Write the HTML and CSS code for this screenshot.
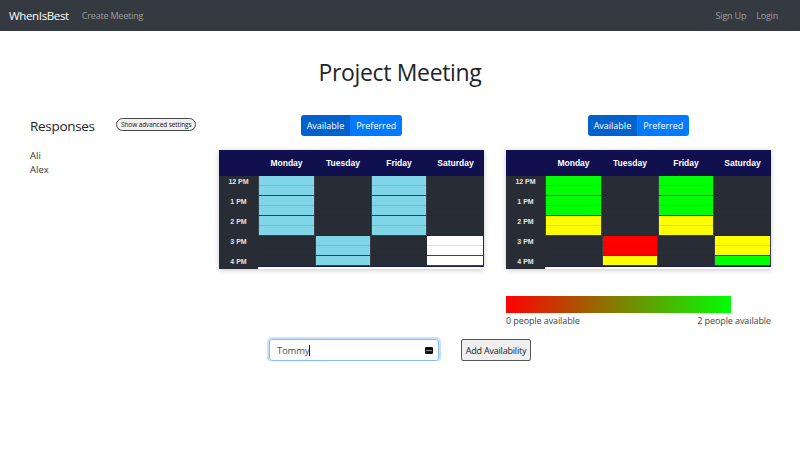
FILE: index.html
```html
<!DOCTYPE html>
<html lang="en">
<head>
<meta charset="utf-8">
<title>WhenIsBest - Project Meeting</title>
<link rel="stylesheet" href="styles.css">
</head>
<body>
<nav class="navbar">
  <div class="nav-left">
    <span class="brand">WhenIsBest</span>
    <span class="nav-link">Create Meeting</span>
  </div>
  <div class="nav-right">
    <span class="nav-link">Sign Up</span>
    <span class="nav-link">Login</span>
  </div>
</nav>

<h1 class="title">Project Meeting</h1>

<div class="main">
  <aside class="responses">
    <div class="resp-head">
      <h2>Responses</h2>
      <button class="pill">Show advanced settings</button>
    </div>
    <ul class="names">
      <li>Ali</li>
      <li>Alex</li>
    </ul>
  </aside>

  <section class="schedule">
    <div class="btn-group">
      <span class="btn active">Available</span>
      <span class="btn">Preferred</span>
    </div>
    <div class="table">
      <div class="thead">
        <div class="th-time"></div>
        <div class="th w57">Monday</div>
        <div class="th w56">Tuesday</div>
        <div class="th w56">Friday</div>
        <div class="th w57">Saturday</div>
      </div>
      <div class="tbody">
        <div class="times">
          <div class="time">12 PM</div>
          <div class="time">1 PM</div>
          <div class="time">2 PM</div>
          <div class="time">3 PM</div>
          <div class="time last">4 PM</div>
        </div>
        <div class="days">
          <div class="day w57">
            <div class="cell c-cyan"><i></i></div>
            <div class="cell c-cyan"><i></i></div>
            <div class="cell c-cyan"><i></i></div>
            <div class="cell"></div>
            <div class="cell half"></div>
          </div>
          <div class="day w56">
            <div class="cell"></div>
            <div class="cell"></div>
            <div class="cell"></div>
            <div class="cell c-cyan"><i></i></div>
            <div class="cell half c-cyan"></div>
          </div>
          <div class="day w56">
            <div class="cell c-cyan"><i></i></div>
            <div class="cell c-cyan"><i></i></div>
            <div class="cell c-cyan"><i></i></div>
            <div class="cell"></div>
            <div class="cell half"></div>
          </div>
          <div class="day w57">
            <div class="cell"></div>
            <div class="cell"></div>
            <div class="cell"></div>
            <div class="cell c-white"><i></i></div>
            <div class="cell half c-white"></div>
          </div>
        </div>
      </div>
    </div>
  </section>

  <section class="schedule">
    <div class="btn-group">
      <span class="btn active">Available</span>
      <span class="btn">Preferred</span>
    </div>
    <div class="table">
      <div class="thead">
        <div class="th-time"></div>
        <div class="th w57">Monday</div>
        <div class="th w56">Tuesday</div>
        <div class="th w56">Friday</div>
        <div class="th w57">Saturday</div>
      </div>
      <div class="tbody">
        <div class="times">
          <div class="time">12 PM</div>
          <div class="time">1 PM</div>
          <div class="time">2 PM</div>
          <div class="time">3 PM</div>
          <div class="time last">4 PM</div>
        </div>
        <div class="days">
          <div class="day w57">
            <div class="cell c-green"><i></i></div>
            <div class="cell c-green"><i></i></div>
            <div class="cell c-yellow"><i></i></div>
            <div class="cell"></div>
            <div class="cell half"></div>
          </div>
          <div class="day w56">
            <div class="cell"></div>
            <div class="cell"></div>
            <div class="cell"></div>
            <div class="cell c-red"><i></i></div>
            <div class="cell half c-yellow"></div>
          </div>
          <div class="day w56">
            <div class="cell c-green"><i></i></div>
            <div class="cell c-green"><i></i></div>
            <div class="cell c-yellow"><i></i></div>
            <div class="cell"></div>
            <div class="cell half"></div>
          </div>
          <div class="day w57">
            <div class="cell"></div>
            <div class="cell"></div>
            <div class="cell"></div>
            <div class="cell c-yellow"><i></i></div>
            <div class="cell half c-green"></div>
          </div>
        </div>
      </div>
    </div>
    <div class="legend">
      <div class="gradient"></div>
      <div class="legend-labels">
        <span>0 people available</span>
        <span>2 people available</span>
      </div>
    </div>
  </section>
</div>

<div class="form-row">
  <div class="input">
    <span class="input-text">Tommy</span><span class="caret"></span>
    <span class="key-icon"><svg width="8" height="7" viewBox="0 0 8 7"><rect x="0" y="0" width="8" height="7" rx="1.2" fill="#111"/><circle cx="2" cy="3.6" r="0.7" fill="#fff"/><circle cx="4" cy="3.6" r="0.7" fill="#fff"/><circle cx="6" cy="3.6" r="0.7" fill="#fff"/></svg></span>
  </div>
  <button class="add-btn">Add Availability</button>
</div>
</body>
</html>
```

FILE: styles.css
```css
* { box-sizing: border-box; }

html, body {
  margin: 0;
  padding: 0;
  background: #fff;
  font-family: "Open Sans", "Noto Sans", sans-serif;
  color: #212529;
}

.navbar {
  height: 31px;
  background: #343a40;
  display: flex;
  align-items: center;
  justify-content: space-between;
  padding: 0 22px 0 9px;
}
.nav-left, .nav-right {
  display: flex;
  align-items: center;
}
.brand {
  color: #fff;
  font-size: 11.5px;
  margin-right: 13px;
  letter-spacing: -0.35px;
}
.nav-link {
  color: rgba(255,255,255,0.5);
  font-size: 9px;
  letter-spacing: -0.2px;
}
.nav-right .nav-link + .nav-link { margin-left: 10px; }

.title {
  margin: 27px 0 0;
  text-align: center;
  font-size: 23px;
  line-height: 29px;
  font-weight: 500;
  letter-spacing: -0.35px;
}

.main {
  display: flex;
  align-items: flex-start;
  margin-top: 28px;
  padding-left: 30px;
  gap: 22px;
}

.responses {
  width: 167px;
}
.resp-head {
  display: flex;
  align-items: center;
  height: 21px;
}
.resp-head h2 {
  margin: 0;
  font-size: 13.5px;
  font-weight: 500;
  width: 86px;
  letter-spacing: -0.3px;
}
.pill {
  height: 13px;
  padding: 0 4px;
  border: 1px solid #444;
  border-radius: 7px;
  background: #f1f1f1;
  font-family: "Open Sans", sans-serif;
  font-size: 6.5px;
  color: #111;
  line-height: 11px;
  letter-spacing: -0.1px;
  margin-top: -3px;
}
.names {
  list-style: none;
  margin: 13px 0 0;
  padding: 0;
  font-size: 9.5px;
  line-height: 14px;
  color: #333;
}

.schedule {
  width: 265px;
  display: flex;
  flex-direction: column;
  align-items: center;
}
.btn-group {
  display: flex;
  height: 21px;
  border-radius: 3px;
  overflow: hidden;
}
.btn {
  background: #007bff;
  color: #fff;
  font-size: 9px;
  line-height: 21px;
  padding: 0 6px;
}
.btn.active { background: #0062cc; }

.table {
  margin-top: 14px;
  width: 265px;
  box-shadow: 0 1px 5px rgba(0,0,0,0.22);
  background: #fff;
  font-family: "Liberation Sans", Arial, sans-serif;
}
.thead {
  display: flex;
  height: 26px;
  background: #10104e;
  color: #fff;
}
.th-time { width: 39px; }
.th {
  font-size: 8.5px;
  font-weight: bold;
  text-align: center;
  line-height: 26px;
}
.w57 { width: 57px; }
.w56 { width: 56px; }

.tbody {
  display: flex;
  align-items: flex-start;
}
.times {
  width: 39px;
  height: 93px;
  background: #282c34;
}
.time {
  height: 20px;
  line-height: 12px;
  font-size: 7px;
  font-weight: bold;
  color: #e6e6e6;
  text-align: center;
}
.time.last { height: 13px; }

.days {
  display: flex;
  border-bottom: 1px solid #1b1d5a;
}
.day {
  display: flex;
  flex-direction: column;
}
.cell {
  height: 20px;
  background: #282c34;
  border-right: 1px solid #262a31;
  border-bottom: 1px solid #262a31;
}
.cell.half { height: 10px; }
.cell i {
  display: block;
  height: 10px;
  border-bottom: 1px solid rgba(0,0,0,0.1);
}
.c-cyan, .c-green, .c-yellow, .c-red {
  border-left: 1px solid #3a3f47;
  border-right-color: #3a3f47;
  border-bottom-color: #3a3f47;
}
.c-cyan { background: #80d5e6; }
.c-green { background: #00ff00; }
.c-yellow { background: #ffff00; }
.c-red { background: #ff0000; }
.c-white { background: #fff; border-bottom-color: #444; }
.c-white i { border-bottom-color: #ddd; }

.legend {
  width: 265px;
  margin-top: 27px;
}
.gradient {
  width: 225px;
  height: 17px;
  background: linear-gradient(to right, #ff0000, #00ff00);
}
.legend-labels {
  display: flex;
  justify-content: space-between;
  margin-top: 2px;
  font-size: 9px;
  line-height: 12px;
  color: #444;
  letter-spacing: -0.1px;
}

.form-row {
  display: flex;
  align-items: center;
  justify-content: center;
  gap: 22px;
  margin-top: 12px;
}
.input {
  width: 170px;
  height: 22px;
  border: 1px solid #80bdff;
  border-radius: 3px;
  box-shadow: 0 0 0 2px rgba(0,123,255,0.22);
  display: flex;
  align-items: center;
  padding: 0 5px 0 7px;
  font-size: 9.5px;
  color: #495057;
  letter-spacing: -0.2px;
}
.caret {
  width: 1px;
  height: 11px;
  background: #222;
}
.key-icon {
  margin-left: auto;
  display: flex;
}
.add-btn {
  width: 70px;
  height: 22px;
  padding: 0;
  border: 1px solid #555;
  border-radius: 2px;
  background: #efefef;
  font-family: "Open Sans", sans-serif;
  font-size: 9px;
  color: #222;
  letter-spacing: -0.2px;
}
```
